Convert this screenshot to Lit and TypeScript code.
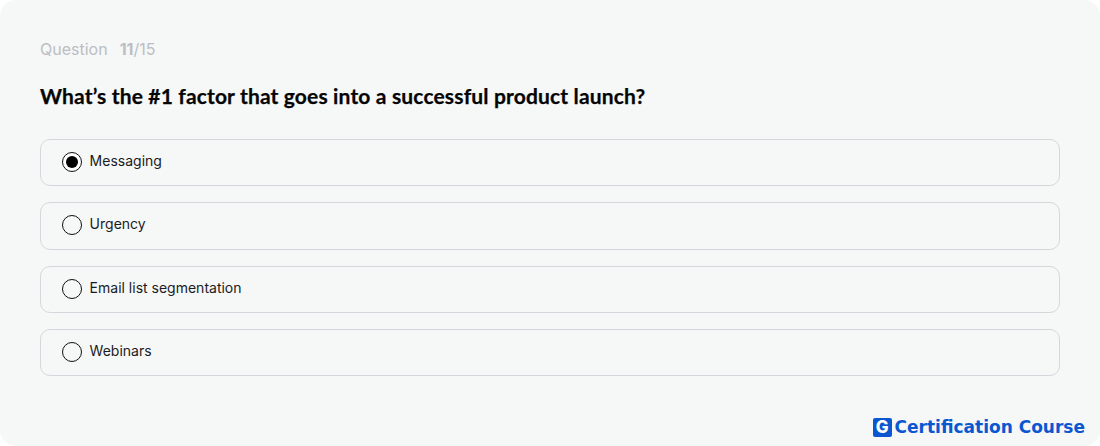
import { LitElement, html, css } from "lit";
import { customElement } from "lit/decorators.js";

const OPTIONS = ["Messaging", "Urgency", "Email list segmentation", "Webinars"];

@customElement("app-root")
export class AppRoot extends LitElement {
  static styles = css`
    :host { display: block; width: 1100px; height: 446px; background: #fff; overflow: hidden; font-family: Inter, "Noto Sans", sans-serif; }
    .card { box-sizing: border-box; position: relative; height: 446px; background: #f6f7f7; border-radius: 16px; padding: 39px 40px 0; }
    .count { font-size: 16px; line-height: 20px; color: #bcbec3; display: flex; gap: 12px; }
    .count b { font-weight: 700; }
    .q { margin: 24px 0 0; font-family: Lato, Inter, sans-serif; font-size: 21px; line-height: 26px; font-weight: 700; letter-spacing: 0.16px; color: #050505; -webkit-text-stroke: 0.25px #050505; }
    .list { margin-top: 29.8px; display: flex; flex-direction: column; gap: 16px; }
    .opt { box-sizing: border-box; height: 47.4px; border: 1px solid #d5d7dc; border-radius: 10px; display: flex; align-items: center; padding: 0 21px; gap: 7.6px; font-size: 14px; color: #1a1c24; }
    .label { padding-bottom: 4.5px; }
    .radio { box-sizing: border-box; width: 20px; height: 20px; margin-top: -1.5px; border: 1.3px solid #111; border-radius: 50%; display: flex; align-items: center; justify-content: center; }
    .radio.on { border-width: 1.6px; background: #fff; }
    .radio.on::after { content: ""; width: 12px; height: 12px; border-radius: 50%; background: #000; }
    .brand { position: absolute; right: 15px; bottom: 9px; display: flex; align-items: center; gap: 3px; font-family: "DejaVu Sans", sans-serif; font-size: 17px; line-height: 20px; font-weight: 700; color: #0b57d0; }
    .logo { width: 19px; height: 19px; border-radius: 2px; background: #0b57d0; color: #fff; display: flex; align-items: center; justify-content: center; font-family: Inter, sans-serif; font-size: 17px; font-weight: 800; }
  `;
  render() {
    return html`<div class="card">
      <div class="count"><span>Question</span><span><b>11</b>/15</span></div>
      <h2 class="q">What’s the #1 factor that goes into a successful product launch?</h2>
      <div class="list">
        ${OPTIONS.map((o, i) => html`<div class="opt"><span class="radio ${i === 0 ? "on" : ""}"></span><span class="label">${o}</span></div>`)}
      </div>
      <div class="brand"><span class="logo">G</span><span>Certification Course</span></div>
    </div>`;
  }
}
